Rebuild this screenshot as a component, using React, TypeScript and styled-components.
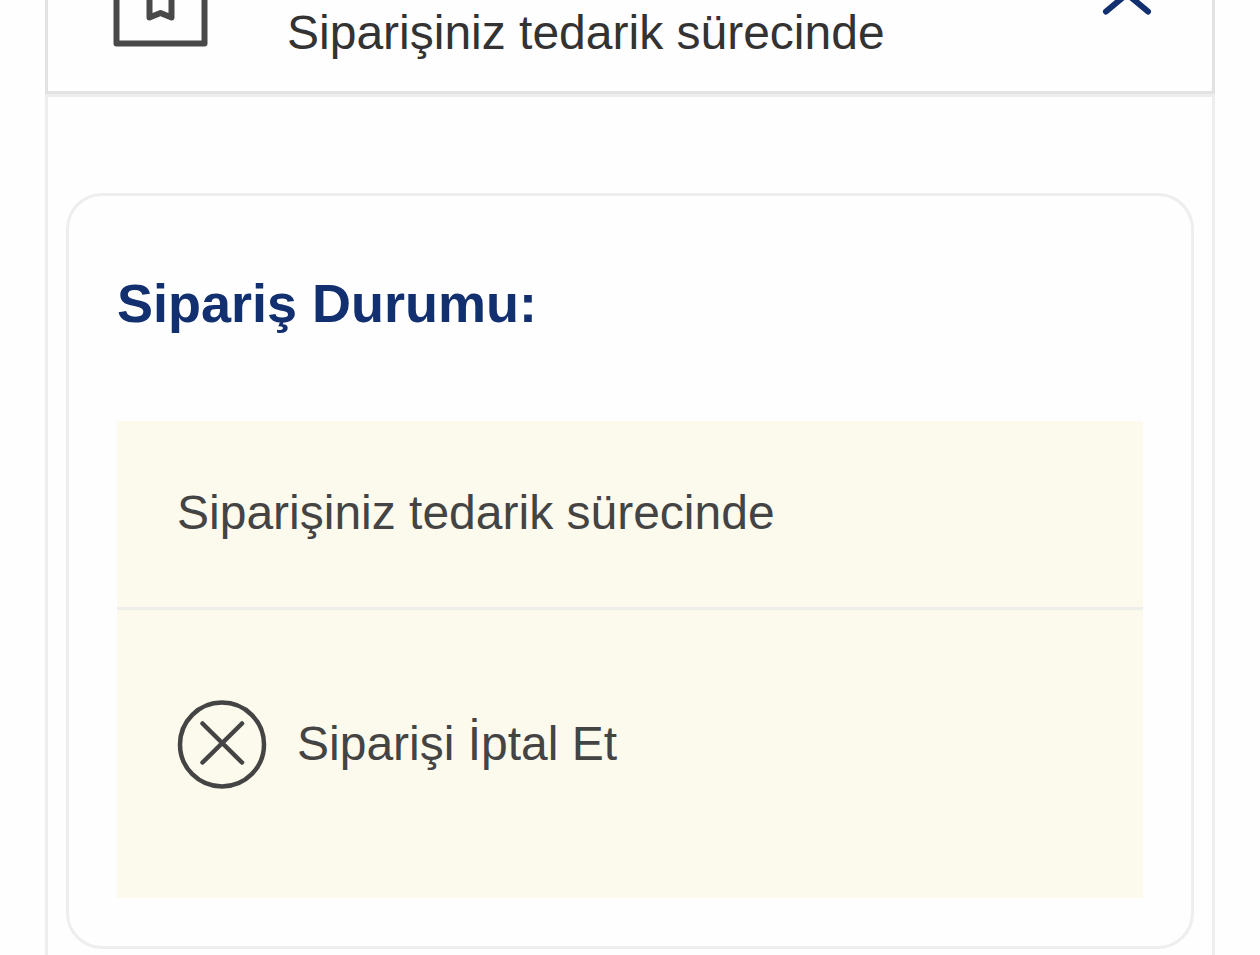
import React, { useState } from "react";
import styled, { createGlobalStyle } from "styled-components";

const GlobalStyle = createGlobalStyle`
  *, *::before, *::after { box-sizing: border-box; }
  body {
    margin: 0;
    background: #fefefe;
    font-family: "Liberation Sans", Arial, sans-serif;
  }
`;

const Page = styled.main`
  display: flex;
  flex-direction: column;
  min-height: 100vh;
  padding: 0 45px;
`;

const Header = styled.button`
  display: flex;
  align-items: flex-start;
  width: 100%;
  padding: 0 60px 30px 64px;
  border: 3px solid #e2e2e2;
  border-top: 0;
  background: transparent;
  font: inherit;
  color: #333333;
  text-align: left;
  cursor: pointer;
`;

const HeaderText = styled.span`
  flex: 1;
  padding: 5px 0 0 77px;
  font-size: 48px;
  line-height: 56px;
`;

const Icon = styled.svg`
  display: block;
  flex: none;
  fill: none;
  stroke-linecap: round;
  stroke-linejoin: round;
`;

const Panel = styled.section`
  flex: 1;
  padding: 96px 18px 6px;
  border: 3px solid #eeeeee;
  border-bottom: 0;
`;

const Card = styled.article`
  padding: 75px 48px 48px;
  border: 3px solid #eeeeee;
  border-radius: 36px;
`;

const Title = styled.h2`
  margin: 0 0 86px;
  font-size: 54px;
  font-weight: 700;
  line-height: 64px;
  color: #12306f;
`;

const StatusBox = styled.div`
  background: #fcfaec;
  color: #444444;
  font-size: 48px;
  line-height: 56px;
`;

const StatusText = styled.p`
  margin: 0;
  padding: 64px 60px 66px;
  border-bottom: 3px solid #eeeeea;
`;

const Actions = styled.div`
  padding: 89px 60px 109px;
`;

const CancelButton = styled.button`
  display: flex;
  align-items: center;
  gap: 30px;
  padding: 0;
  border: 0;
  background: transparent;
  font: inherit;
  color: inherit;
  cursor: pointer;
`;

const BoxIcon = () => (
  <Icon width="98" height="48" viewBox="0 0 98 48" stroke="#494949" strokeWidth="6" aria-hidden="true">
    <path d="M4.5 -48V43.5H92.5V-48" />
    <path d="M37.5 -20V17.5L48.5 13L59.5 17.5V-20" />
  </Icon>
);

const ChevronIcon = ({ open }: { open: boolean }) => (
  <Icon width="50" height="16" viewBox="0 0 50 16" stroke="#12306f" strokeWidth="6" aria-hidden="true">
    <path d={open ? "M4 11.5L25 -6L46 11.5" : "M4 3L25 20L46 3"} />
  </Icon>
);

const CancelIcon = () => (
  <Icon width="90" height="90" viewBox="0 0 90 90" stroke="#444444" strokeWidth="4.5" aria-hidden="true">
    <circle cx="45" cy="45.5" r="42" />
    <path d="M25.5 24.5L65 63.5M65 24.5L25.5 63.5" />
  </Icon>
);

export default function App() {
  const [open, setOpen] = useState(true);
  return (
    <>
      <GlobalStyle />
      <Page>
        <Header type="button" aria-expanded={open} onClick={() => setOpen(!open)}>
          <BoxIcon />
          <HeaderText>Siparişiniz tedarik sürecinde</HeaderText>
          <ChevronIcon open={open} />
        </Header>
        {open && (
          <Panel>
            <Card>
              <Title>Sipariş Durumu:</Title>
              <StatusBox>
                <StatusText>Siparişiniz tedarik sürecinde</StatusText>
                <Actions>
                  <CancelButton type="button">
                    <CancelIcon />
                    Siparişi İptal Et
                  </CancelButton>
                </Actions>
              </StatusBox>
            </Card>
          </Panel>
        )}
      </Page>
    </>
  );
}
